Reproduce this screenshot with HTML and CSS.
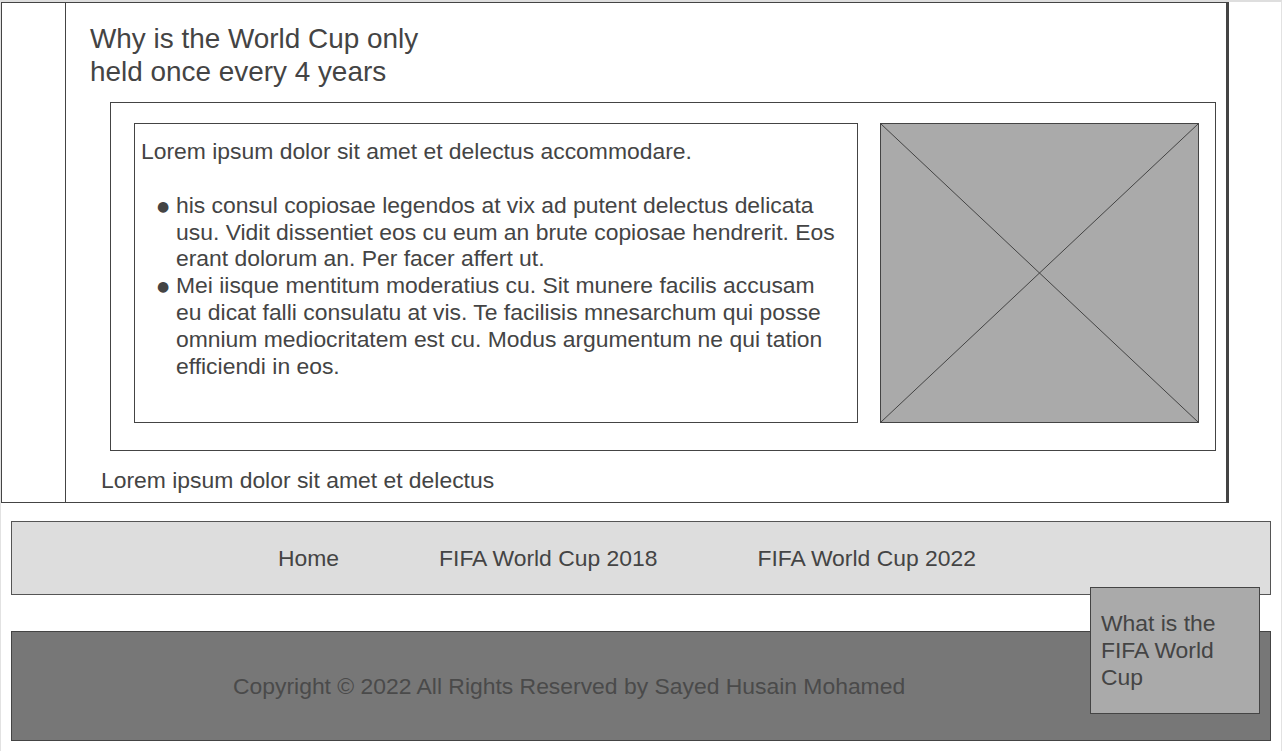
FILE: index.html
```html
<!DOCTYPE html>
<html lang="en">
<head>
<meta charset="utf-8">
<title>Why is the World Cup only held once every 4 years</title>
<link rel="stylesheet" href="styles.css">
</head>
<body>
<div class="page">
  <section class="main">
    <div class="side"></div>
    <div class="content">
      <h1 class="title">Why is the World Cup only<br>held once every 4 years</h1>
      <div class="panel">
        <div class="textbox">
          <p class="lead">Lorem ipsum dolor sit amet et delectus accommodare.</p>
          <ul class="points">
            <li>his consul copiosae legendos at vix ad putent delectus delicata usu. Vidit dissentiet eos cu eum an brute copiosae hendrerit. Eos erant dolorum an. Per facer affert ut.</li>
            <li>Mei iisque mentitum moderatius cu. Sit munere facilis accusam eu dicat falli consulatu at vis. Te facilisis mnesarchum qui posse omnium mediocritatem est cu. Modus argumentum ne qui tation efficiendi in eos.</li>
          </ul>
        </div>
        <div class="image">
          <svg class="cross" viewBox="0 0 317 298" preserveAspectRatio="none" aria-hidden="true">
            <line x1="0" y1="0" x2="317" y2="298"/>
            <line x1="317" y1="0" x2="0" y2="298"/>
          </svg>
        </div>
      </div>
      <p class="caption">Lorem ipsum dolor sit amet et delectus</p>
    </div>
  </section>
  <nav class="nav">
    <a href="#">Home</a>
    <a href="#">FIFA World Cup 2018</a>
    <a href="#">FIFA World Cup 2022</a>
  </nav>
  <footer class="footer">Copyright © 2022 All Rights Reserved by Sayed Husain Mohamed</footer>
  <div class="popup">What is the FIFA World Cup</div>
</div>
</body>
</html>
```
FILE: styles.css
```css
html, body {
  margin: 0;
  padding: 0;
  background: #fff;
}
body {
  font-family: "Liberation Sans", Arial, sans-serif;
  color: #444;
}
.page {
  position: relative;
  width: 1280px;
  height: 749px;
  border-top: 2px solid #dedede;
  border-left: 1px solid #e2e2e2;
  border-right: 1px solid #e2e2e2;
}
.main {
  display: flex;
  width: 1224px;
  height: 499px;
  border: 1px solid #444;
  border-right-width: 3px;
}
.side {
  width: 63px;
  border-right: 1px solid #444;
  flex: none;
}
.content {
  flex: 1;
  display: flex;
  flex-direction: column;
}
.title {
  margin: 0;
  padding: 19px 0 0 24px;
  font-weight: normal;
  font-size: 27.9px;
  line-height: 33px;
  color: #444;
}
.panel {
  display: flex;
  gap: 22px;
  margin: 14px 11px 0 44px;
  padding: 20px 16px 27px 23px;
  border: 1px solid #444;
}
.textbox {
  width: 701px;
  height: 298px;
  border: 1px solid #444;
  padding: 0 15px 0 6px;
  font-size: 22.9px;
  line-height: 26.8px;
}
.lead {
  margin: 14px 0 27px;
}
.points {
  list-style: none;
  margin: 0;
  padding: 0 0 0 35px;
}
.points li::before {
  content: "●";
  display: inline-block;
  width: 19px;
  margin-left: -19px;
  font-family: "DejaVu Sans", sans-serif;
  font-size: 14px;
  line-height: 1;
  vertical-align: 2px;
}
.image {
  width: 317px;
  height: 298px;
  border: 1px solid #444;
  background: #aaa;
}
.cross {
  display: block;
  width: 100%;
  height: 100%;
}
.cross line {
  stroke: #444;
  stroke-width: 1;
}
.caption {
  margin: 16px 0 0 35px;
  font-size: 22.9px;
  line-height: 27px;
}
.nav {
  display: flex;
  align-items: center;
  gap: 100px;
  height: 72px;
  margin: 18px 10px 0;
  padding-left: 266px;
  background: #ddd;
  border: 1px solid #555;
}
.nav a {
  color: #444;
  text-decoration: none;
  font-size: 22.9px;
}
.footer {
  display: flex;
  align-items: center;
  height: 108px;
  margin: 36px 10px 0;
  padding-left: 221px;
  background: #777;
  border: 1px solid #444;
  font-size: 22.9px;
  color: #4a4a4a;
}
.popup {
  position: absolute;
  left: 1089px;
  top: 585px;
  width: 148px;
  height: 103px;
  padding: 22px 10px 0;
  background: #aaa;
  border: 1px solid #444;
  font-size: 22.9px;
  line-height: 27px;
  color: #444;
}
```
